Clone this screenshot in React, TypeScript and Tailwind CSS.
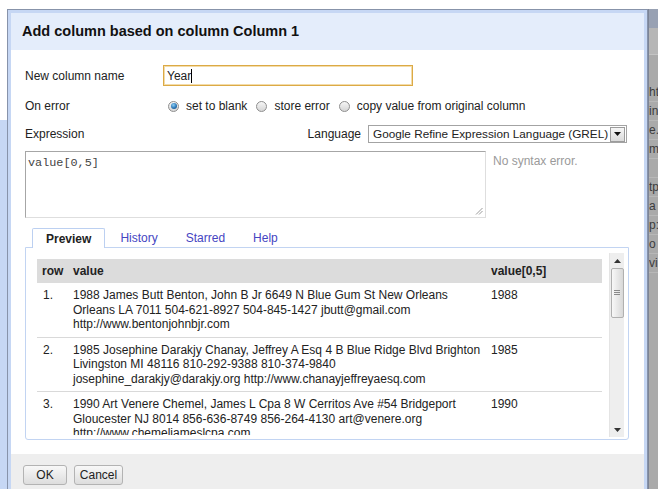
import React from "react";

function Radio({ checked }: { checked?: boolean }) {
  return (
    <span className="w-[11px] h-[11px] rounded-full border border-[#8e8e8e] bg-gradient-to-b from-[#f6f6f6] to-[#d6d6d6] flex items-center justify-center shrink-0">
      {checked ? (
        <span className="w-[6px] h-[6px] rounded-full bg-[radial-gradient(circle_at_40%_35%,#8fd0f5,#2b77b8_55%,#15446e)]" />
      ) : null}
    </span>
  );
}

const rows = [
  {
    n: "1.",
    lines: [
      "1988 James Butt Benton, John B Jr 6649 N Blue Gum St New Orleans",
      "Orleans LA 7011 504-621-8927 504-845-1427 jbutt@gmail.com",
      "http://www.bentonjohnbjr.com",
    ],
    v: "1988",
  },
  {
    n: "2.",
    lines: [
      "1985 Josephine Darakjy Chanay, Jeffrey A Esq 4 B Blue Ridge Blvd Brighton",
      "Livingston MI 48116 810-292-9388 810-374-9840",
      "josephine_darakjy@darakjy.org http://www.chanayjeffreyaesq.com",
    ],
    v: "1985",
  },
  {
    n: "3.",
    lines: [
      "1990 Art Venere Chemel, James L Cpa 8 W Cerritos Ave #54 Bridgeport",
      "Gloucester NJ 8014 856-636-8749 856-264-4130 art@venere.org",
      "http://www.chemeljameslcpa.com",
    ],
    v: "1990",
  },
];

const stripRows = ["http", "in", "e.c", "ma", "", "tp:", "a", "p:/", "o", "vi"];

export default function App() {
  return (
    <div className="w-[658px] h-[489px] overflow-hidden bg-white flex flex-col font-['Liberation_Sans',Arial,sans-serif] text-[12px] text-[#222]">
      <div className="h-[9px] shrink-0" />
      <div className="flex flex-1 min-h-0">
        {/* left edge of page behind */}
        <div className="w-[7px] flex flex-col shrink-0">
          <div className="h-[111px] bg-white" />
          <div className="flex-1 bg-[#c6d7f4]" />
        </div>

        {/* dialog */}
        <div className="w-[641px] shrink-0 flex flex-col border-l border-t border-r border-[#8793aa] bg-[#c6d7f4] pt-[3px] px-[3px]">
          <div className="h-[37px] shrink-0 bg-[#e4edfb] flex items-center pl-[11px] font-bold text-[14.5px] text-[#111]">
            Add column based on column Column 1
          </div>

          <div className="h-[404px] shrink-0 bg-white pl-[14px] pr-[15px] pt-[15px] flex flex-col">
            {/* row 1 */}
            <div className="h-[21px] flex items-center">
              <div className="w-[138px]">New column name</div>
              <div className="w-[250px] h-[21px] border border-[#dcaa45] shadow-[inset_0_0_0_1px_#f3dcaa] flex items-center pl-[3px]">
                <span>Year</span>
                <span className="w-px h-[14px] bg-black" />
              </div>
            </div>

            {/* row 2 */}
            <div className="mt-[10px] h-[20px] flex items-center">
              <div className="w-[138px]">On error</div>
              <div className="flex items-center">
                <span className="ml-[5px]" />
                <Radio checked />
                <span className="ml-[7px]">set to blank</span>
                <span className="ml-[9px]" />
                <Radio />
                <span className="ml-[7px]">store error</span>
                <span className="ml-[9px]" />
                <Radio />
                <span className="ml-[7px]">copy value from original column</span>
              </div>
            </div>

            {/* row 3 */}
            <div className="mt-[9px] h-[18px] flex items-center">
              <div>Expression</div>
              <div className="ml-auto">Language</div>
              <div className="ml-[7px] mr-[2px] w-[259px] h-[18px] border border-[#a3a3a3] flex items-center pl-[4px] pr-px">
                <span className="flex-1 whitespace-nowrap text-[11.75px]">Google Refine Expression Language (GREL)</span>
                <span className="w-[15px] h-[15px] border border-[#9c9c9c] bg-gradient-to-b from-[#f6f6f6] to-[#dadada] flex items-center justify-center">
                  <svg width="7" height="4" viewBox="0 0 7 4">
                    <path d="M0 0 L7 0 L3.5 4 Z" fill="#111" />
                  </svg>
                </span>
              </div>
            </div>

            {/* row 4 */}
            <div className="mt-[8px] flex items-start">
              <div className="w-[461px] h-[67px] border-t border-l border-[#a6a6a6] border-b border-r border-b-[#dedede] border-r-[#dedede] flex flex-col pl-[2px] pt-[4px] pr-[2px] pb-[2px]">
                <div className="font-['Liberation_Mono',monospace] text-[11.8px] leading-[14px] text-[#444]">value[0,5]</div>
                <div className="mt-auto self-end">
                  <svg width="8" height="8" viewBox="0 0 8 8">
                    <path d="M7.5 1 L1 7.5 M7.5 4 L4 7.5" stroke="#9a9a9a" strokeWidth="1" />
                  </svg>
                </div>
              </div>
              <div className="ml-[7px] mt-[1px] text-[#9a9a9a]">No syntax error.</div>
            </div>

            {/* tabs */}
            <div className="mt-[10px] h-[20px] flex items-end pl-[7px] gap-[2px]">
              <div className="relative z-10 h-[20px] px-[13px] flex items-center bg-white border-l border-t border-r border-[#bcd0f1] rounded-t-[2px] font-bold text-[#222]">
                Preview
              </div>
              <div className="h-[20px] px-[13px] flex items-center text-[#4545c2]">History</div>
              <div className="h-[20px] px-[13px] flex items-center text-[#4545c2]">Starred</div>
              <div className="h-[20px] px-[13px] flex items-center text-[#4545c2]">Help</div>
            </div>

            {/* panel */}
            <div className="-mt-px h-[193px] border border-[#c2d4f2] rounded-b-[3px] pl-[5px] pr-[4px] pt-[5px] pb-[2px] flex">
              <div className="flex h-[184px] w-full">
                <div className="flex-1 pt-[6px] pl-[6px] pr-[7px]">
                  <div className="h-[176px] overflow-hidden">
                    <div className="grid grid-cols-[32px_418px_115px] h-[24px] items-center bg-[#dcdcdc] font-bold text-[#222]">
                      <div className="pl-[5px]">row</div>
                      <div className="pl-[4px]">value</div>
                      <div className="pl-[4px]">value[0,5]</div>
                    </div>
                    {rows.map((r) => (
                      <div
                        key={r.n}
                        className="grid grid-cols-[32px_418px_115px] border-b border-[#d9d9d9] pt-[5px] pb-[5px] leading-[14.5px] text-[#222]"
                      >
                        <div className="pl-[6px]">{r.n}</div>
                        <div className="pl-[4px]">
                          {r.lines.map((l) => (
                            <div key={l} className="whitespace-nowrap">
                              {l}
                            </div>
                          ))}
                        </div>
                        <div className="pl-[4px]">{r.v}</div>
                      </div>
                    ))}
                  </div>
                </div>
                {/* scrollbar */}
                <div className="w-[15px] shrink-0 bg-[#eeeeee] border-l border-[#e4e4e4] flex flex-col items-center">
                  <div className="h-[15px] flex items-center justify-center">
                    <svg width="7" height="4" viewBox="0 0 7 4">
                      <path d="M0 4 L7 4 L3.5 0 Z" fill="#333" />
                    </svg>
                  </div>
                  <div className="w-[13px] h-[50px] rounded-[2px] border border-[#b0b0b0] bg-gradient-to-r from-[#f8f8f8] to-[#d8d8d8] flex items-center justify-center">
                    <svg width="6" height="6" viewBox="0 0 6 6">
                      <path d="M0 0.5 H6 M0 2.5 H6 M0 4.5 H6" stroke="#8a8a8a" strokeWidth="1" />
                    </svg>
                  </div>
                  <div className="flex-1" />
                  <div className="h-[15px] flex items-center justify-center">
                    <svg width="7" height="4" viewBox="0 0 7 4">
                      <path d="M0 0 L7 0 L3.5 4 Z" fill="#333" />
                    </svg>
                  </div>
                </div>
              </div>
            </div>
          </div>

          {/* footer */}
          <div className="flex-1 bg-[#eeeeee] pl-[12px] pt-[11px] flex items-start">
            <div className="w-[44px] h-[20px] rounded-[3px] border border-[#b3b3b3] bg-gradient-to-b from-[#f8f8f8] to-[#dddddd] flex items-center justify-center text-[#222]">
              OK
            </div>
            <div className="ml-[7px] w-[49px] h-[20px] rounded-[3px] border border-[#b3b3b3] bg-gradient-to-b from-[#f8f8f8] to-[#dddddd] flex items-center justify-center text-[#222]">
              Cancel
            </div>
          </div>
        </div>

        {/* right edge of page behind */}
        <div className="w-[10px] shrink-0 overflow-hidden flex flex-col bg-[#aaaaaa] border-l border-[#7c8496]">
          <div className="h-[19px] bg-[#98a1b3]" />
          <div className="h-[27px] bg-[#b6b6b6] border-b border-[#c4c4c4]" />
          <div className="h-[28px]" />
          {stripRows.map((t, i) => (
            <div
              key={i}
              className="h-[19px] leading-[19px] whitespace-nowrap text-[#3c3c3c] border-b border-[#b8b8b8]"
            >
              {t}
            </div>
          ))}
        </div>
      </div>
    </div>
  );
}
